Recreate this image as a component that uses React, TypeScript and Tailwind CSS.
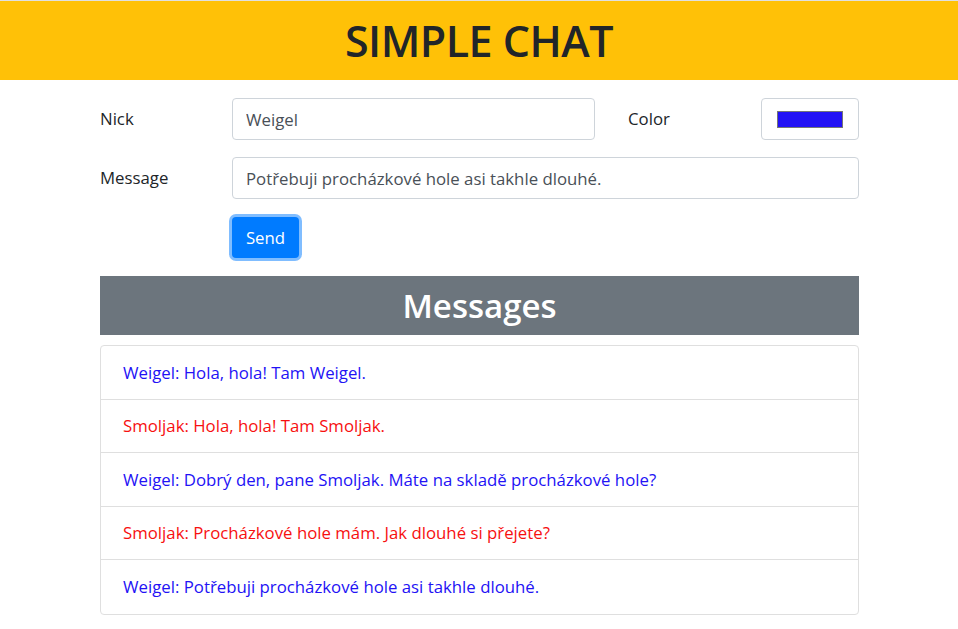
import { useState } from 'react';

type Msg = { nick: string; color: string; text: string };

const messages: Msg[] = [
  { nick: 'Weigel', color: '#2312f5', text: 'Hola, hola! Tam Weigel.' },
  { nick: 'Smoljak', color: '#f71010', text: 'Hola, hola! Tam Smoljak.' },
  { nick: 'Weigel', color: '#2312f5', text: 'Dobrý den, pane Smoljak. Máte na skladě procházkové hole?' },
  { nick: 'Smoljak', color: '#f71010', text: 'Procházkové hole mám. Jak dlouhé si přejete?' },
  { nick: 'Weigel', color: '#2312f5', text: 'Potřebuji procházkové hole asi takhle dlouhé.' },
];

export default function App() {
  const [nick, setNick] = useState('Weigel');
  const [message, setMessage] = useState('Potřebuji procházkové hole asi takhle dlouhé.');

  return (
    <div className="min-h-screen bg-white text-[16.8px] text-[#212529] font-['Open_Sans',sans-serif]">
      {/* header */}
      <header className="h-20 bg-[#ffc107] border-t border-[#e0e0e0] flex items-center justify-center">
        <h1 className="text-[43px] font-semibold leading-none tracking-[-0.5px] text-[#212529]">SIMPLE CHAT</h1>
      </header>

      <div className="w-[759px] ml-[100px] pt-[18px]">
        {/* nick + color */}
        <div className="flex items-center h-[42px]">
          <label className="w-[132px]">Nick</label>
          <input
            value={nick}
            onChange={(e) => setNick(e.target.value)}
            className="w-[363px] h-[42px] px-[13px] border border-[#ced4da] rounded-[4px] text-[#495057] outline-none"
          />
          <label className="ml-[33px] w-[133px]">Color</label>
          <div className="w-[98px] h-[42px] border border-[#ced4da] rounded-[4px] flex items-center justify-center">
            <div className="w-[66px] h-[17px] bg-[#2312f5] border border-[#767676]" />
          </div>
        </div>

        {/* message */}
        <div className="flex items-center h-[42px] mt-[17px]">
          <label className="w-[132px]">Message</label>
          <input
            value={message}
            onChange={(e) => setMessage(e.target.value)}
            className="flex-1 h-[42px] px-[13px] border border-[#ced4da] rounded-[4px] text-[#495057] outline-none"
          />
        </div>

        {/* send */}
        <div className="pl-[132px] mt-[18px]">
          <button className="w-[67px] h-[41px] bg-[#007bff] text-white rounded-[4px] ring-[3px] ring-[#80bdff]">
            Send
          </button>
        </div>

        {/* messages header */}
        <div className="mt-[18px] h-[59px] bg-[#6c757d] flex items-center justify-center">
          <h2 className="text-[33px] font-semibold text-white leading-none">Messages</h2>
        </div>

        {/* list */}
        <ul className="mt-[10px] border border-[#dfdfdf] rounded-[4px]">
          {messages.map((m, i) => (
            <li
              key={i}
              className="h-[53.5px] flex items-center px-[22px] border-b border-[#dfdfdf] last:border-b-0"
              style={{ color: m.color }}
            >
              {m.nick}: {m.text}
            </li>
          ))}
        </ul>
      </div>
    </div>
  );
}
